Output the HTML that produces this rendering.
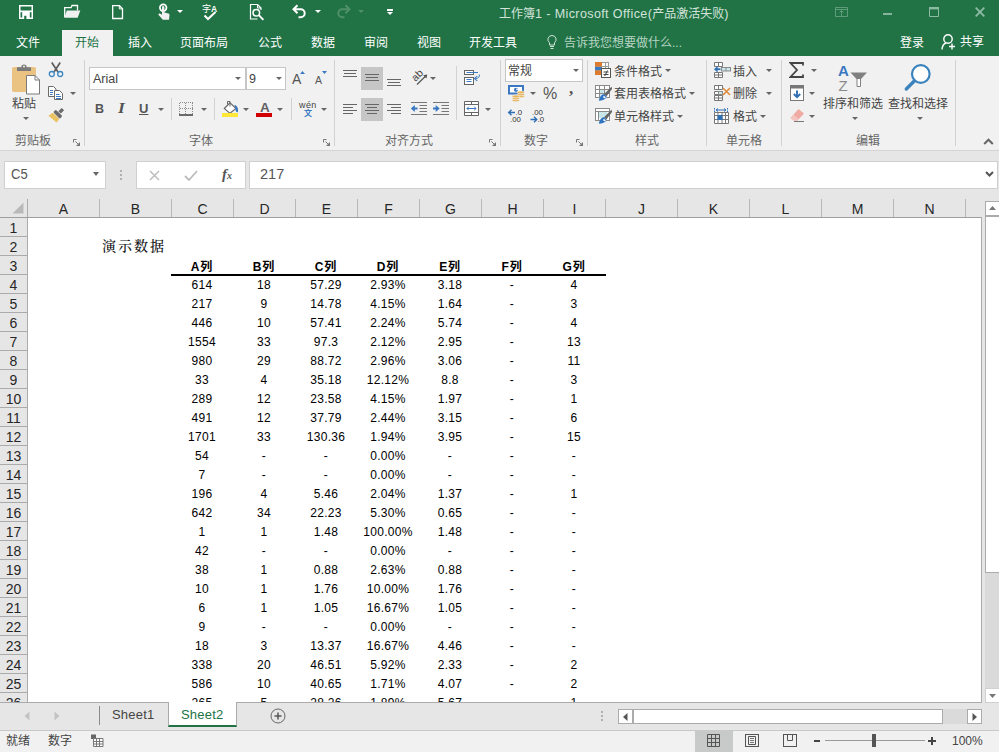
<!DOCTYPE html>
<html lang="zh-CN">
<head>
<meta charset="utf-8">
<title>工作簿1 - Microsoft Office</title>
<style>
html,body{margin:0;padding:0}
body{width:999px;height:752px;overflow:hidden;position:relative;background:#e6e6e6;
 font-family:"Liberation Sans","Noto Sans CJK SC",sans-serif;font-size:12px;color:#444}
div,span,svg{position:absolute;box-sizing:border-box}
.t{white-space:nowrap;line-height:16px;height:16px;margin-top:1px}
#titlebar{left:0;top:0;width:999px;height:56px;background:#217346}
#titlebar .t{color:#fff;margin-top:0}
#ribbon{left:0;top:56px;width:999px;height:94px;background:#f1f1f1}
#ribline{left:0;top:150px;width:999px;height:1px;background:#d4d4d4}
.sep{width:1px;background:#d2d2d2}
.gl{color:#666;line-height:16px;height:16px;white-space:nowrap;margin-top:1px}
.box{background:#fff;border:1px solid #c6c6c6}
.arr{width:0;height:0;border-left:3px solid transparent;border-right:3px solid transparent;border-top:3px solid #666}
.hl{background:#c6c6c6}
#grid{left:28px;top:218px;width:953px;height:484px;background:#fff;overflow:hidden}
.ch{top:200px;height:18px;line-height:18px;text-align:center;font-size:14px;color:#262626}
.rh{left:0;width:27px;height:18px;line-height:20px;text-align:center;font-size:14px;color:#262626}
.c{height:19px;line-height:19px;margin-top:1px;letter-spacing:.3px;text-align:center;font-size:12px;color:#000;white-space:nowrap}
.hb{font-weight:bold;letter-spacing:.8px}
</style>
</head>
<body>
<div id="titlebar">
 <!-- quick access toolbar -->
 <svg style="left:19px;top:5px" width="14" height="14" viewBox="0 0 14 14"><rect x=".75" y=".75" width="12.500" height="12.500" fill="none" stroke="#fff" stroke-width="1.500"/><rect x="1" y="5.500" width="12" height="1.700" fill="#fff"/><rect x="3.200" y="7" width="7.600" height="6.500" fill="#fff"/><rect x="5.200" y="10.800" width="2.200" height="3.200" fill="#217346"/></svg>
 <svg style="left:63px;top:4px" width="18" height="15" viewBox="0 0 18 15"><path d="M1.700 13V3.700h6.300l1-2.200h5.500v5" fill="none" stroke="#fff" stroke-width="1.300"/><path d="M1.200 13.800l2.600-7.300h13.500l-2.600 7.300z" fill="#f0f0f0"/></svg>
 <svg style="left:111px;top:4px" width="13" height="16" viewBox="0 0 13 16"><path d="M1.700 1.700h6.800l3 3v9.800h-9.800z" fill="none" stroke="#fff" stroke-width="1.300"/><path d="M8.300 1.700v3.200h3.200" fill="none" stroke="#fff" stroke-width="1"/></svg>
 <svg style="left:157px;top:3px" width="14" height="18" viewBox="0 0 14 18"><circle cx="6.200" cy="4.700" r="3.300" fill="none" stroke="#fff" stroke-width="1.700"/><path d="M5 4.200a1.200 1.200 0 0 1 2.400 0v5.300l4 1a1.500 1.500 0 0 1 1.100 1.600l-.5 4.600h-6.200l-4.600-5.200 1.300-1.300 2.500 1.600z" fill="#f0f0f0"/></svg>
 <div class="arr" style="left:177px;top:10px;border-top-color:#fff"></div>
 <div class="t" style="left:202px;top:4px;font-size:9px;line-height:10px;height:10px">字<span style="position:static;font-weight:bold;font-size:8.500px">A</span></div>
 <svg style="left:203px;top:11px" width="14" height="10" viewBox="0 0 14 10"><path d="M1.5 4.5l3.5 3.5 7.5-7" fill="none" stroke="#fff" stroke-width="2"/></svg>
 <svg style="left:249px;top:3px" width="16" height="18" viewBox="0 0 16 18"><path d="M9 1.500h-7.500v14.500h7" fill="none" stroke="#fff" stroke-width="1.200"/><path d="M8.500 1.500l3.500 3.500v2" fill="none" stroke="#fff" stroke-width="1.200"/><path d="M8.500 1.500v3.500h3.500" fill="none" stroke="#fff" stroke-width="1"/><circle cx="7.300" cy="9.700" r="3.300" fill="none" stroke="#fff" stroke-width="1.500"/><path d="M9.800 12.200l4.600 4.600" stroke="#fff" stroke-width="1.900"/></svg>
 <svg style="left:291px;top:4px" width="17" height="15" viewBox="0 0 17 15"><path d="M6.500 1.300L2.500 5.300l4 4M2.500 5.300h7.200a4 4 0 0 1 0 8h-2.200" fill="none" stroke="#fff" stroke-width="2"/></svg>
 <div class="arr" style="left:315px;top:10px;border-top-color:#fff"></div>
 <svg style="left:335px;top:4px" width="17" height="15" viewBox="0 0 17 15"><path d="M10.500 1.300L14.500 5.300l-4 4M14.500 5.300h-7.200a4 4 0 0 0 0 8h2.200" fill="none" stroke="#4f9069" stroke-width="2"/></svg>
 <div class="arr" style="left:358px;top:10px;border-top-color:#4f9069"></div>
 <div style="left:387px;top:9px;width:6px;height:1.500px;background:#fff"></div>
 <div class="arr" style="left:387px;top:12px;border-top-color:#fff"></div>
 <div class="t" style="left:499px;top:6px;color:#d3e3da;font-size:12px">工作簿<span style="position:static;font-size:12.500px;letter-spacing:.4px">1 - Microsoft Office(</span>产品激活失败<span style="position:static;font-size:12.500px">)</span></div>
 <!-- window buttons -->
 <svg style="left:835px;top:7px" width="13" height="10" viewBox="0 0 13 10"><path d="M.5.500h12v9h-12z" fill="none" stroke="#5f9c7b" stroke-width="1"/><path d="M.5 2.500h12M6.500 3.500v6M4.500 5.500l2-2 2 2" fill="none" stroke="#5f9c7b" stroke-width="1"/></svg>
 <div style="left:883px;top:12.500px;width:9px;height:2px;background:#86b59b"></div>
 <svg style="left:929px;top:7px" width="10" height="10" viewBox="0 0 10 10"><path d="M.5 1h9v8.500h-9z" fill="none" stroke="#8dbaa2" stroke-width="1"/><path d="M0 1.200h10" stroke="#8dbaa2" stroke-width="2.400"/></svg>
 <svg style="left:975px;top:7px" width="10" height="10" viewBox="0 0 10 10"><path d="M.7 .7l8.600 8.600M9.300 .7L.7 9.300" stroke="#8dbaa2" stroke-width="1.900"/></svg>
 <!-- tabs -->
 <div style="left:62px;top:30px;width:51px;height:26px;background:#f1f1f1"></div>
 <div class="t" style="left:16px;top:35px">文件</div>
 <div class="t" style="left:75px;top:35px;color:#217346">开始</div>
 <div class="t" style="left:128px;top:35px">插入</div>
 <div class="t" style="left:180px;top:35px">页面布局</div>
 <div class="t" style="left:258px;top:35px">公式</div>
 <div class="t" style="left:311px;top:35px">数据</div>
 <div class="t" style="left:364px;top:35px">审阅</div>
 <div class="t" style="left:417px;top:35px">视图</div>
 <div class="t" style="left:469px;top:35px">开发工具</div>
 <svg style="left:546px;top:34px" width="12" height="16" viewBox="0 0 12 16"><path d="M6 1.500a4 4 0 0 1 2.500 7.200v2.300h-5v-2.300a4 4 0 0 1 2.500-7.200z" fill="none" stroke="#cfe3d7" stroke-width="1"/><path d="M4 12.500h4M4.500 14.500h3" stroke="#cfe3d7" stroke-width="1"/></svg>
 <div class="t" style="left:564px;top:35px;color:#b7d3c2">告诉我您想要做什么...</div>
 <div class="t" style="left:900px;top:35px">登录</div>
 <svg style="left:940px;top:33px" width="18" height="18" viewBox="0 0 18 18"><circle cx="8" cy="6" r="4.200" fill="none" stroke="#fff" stroke-width="1.400"/><path d="M2 16.500c.3-4 2.500-6 4-6.500" fill="none" stroke="#fff" stroke-width="1.400"/><path d="M9 13.500h6M12 10.500v6" stroke="#fff" stroke-width="1.400"/></svg>
 <div class="t" style="left:960px;top:34px">共享</div>
</div>
<div id="ribbon"></div>
<div id="ribline"></div>
<!-- clipboard group -->
<svg style="left:11px;top:62px" width="31" height="34" viewBox="0 0 31 34"><rect x="1" y="5" width="24" height="25" rx="1.800" fill="#eac282"/><path d="M6 9v-3.800h4.300a2.700 2.700 0 0 1 5.400 0h4.300v3.800z" fill="#7a7a7a"/><circle cx="13" cy="4.600" r="1" fill="#f1f1f1"/><path d="M15.500 13.500h8.500l4.500 4.500v14h-13z" fill="#fff" stroke="#7a7a7a" stroke-width="1"/><path d="M24 13.500v4.500h4.500" fill="none" stroke="#7a7a7a" stroke-width="1"/></svg>
<div class="t" style="left:12px;top:95px;color:#444">粘贴</div>
<div class="arr" style="left:23px;top:117px"></div>
<svg style="left:48px;top:61px" width="16" height="17" viewBox="0 0 16 17"><path d="M3.800 1.500l6.200 9.500M12.200 1.500l-6.200 9.500" stroke="#5f5f5f" stroke-width="1.700" fill="none"/><circle cx="3.800" cy="13" r="2.500" fill="none" stroke="#3a87c2" stroke-width="1.300"/><circle cx="12.200" cy="13" r="2.500" fill="none" stroke="#3a87c2" stroke-width="1.300"/></svg>
<svg style="left:47px;top:85px" width="17" height="16" viewBox="0 0 17 16"><path d="M1.500 1.500h5l2.500 2.500v7.500h-7.500z" fill="#fff" stroke="#6a6a6a" stroke-width="1"/><path d="M3 5.500h3M3 7.500h3M3 9.500h2.500" stroke="#3a78c2" stroke-width="1"/><path d="M7.500 5.500h5l3 3v6h-8z" fill="#fff" stroke="#6a6a6a" stroke-width="1"/><path d="M9 9.500h3.500M9 11.500h5M9 13.500h5" stroke="#3a78c2" stroke-width="1"/></svg>
<div class="arr" style="left:70px;top:92px"></div>
<svg style="left:47px;top:106px" width="19" height="19" viewBox="-9.500 -9.500 19 19"><g transform="rotate(45)"><rect x="-1.700" y="-9" width="3.400" height="4.600" fill="#6a6a6a"/><rect x="-4.700" y="-3.700" width="9.400" height="3.700" rx="1.200" fill="#6a6a6a"/><path d="M-4.500 .6h9l.5 4.200-10.500 1.200z" fill="#ebc262"/></g></svg>
<div class="gl" style="left:15px;top:132px">剪贴板</div>
<svg style="left:73px;top:139px" width="7" height="7" viewBox="0 0 7 7"><path d="M.5 3.500v-3h3" fill="none" stroke="#777" stroke-width="1"/><path d="M2.500 2.500l3.500 3.500" stroke="#777" stroke-width="1"/><path d="M7 3v4h-4z" fill="#777"/></svg>
<div class="sep" style="left:84px;top:60px;height:86px"></div>
<!-- font group -->
<div class="box" style="left:89px;top:67px;width:157px;height:23px"></div>
<div class="t" style="left:93px;top:70px;color:#444;font-size:12.500px">Arial</div>
<div class="arr" style="left:235px;top:77px"></div>
<div class="box" style="left:246px;top:67px;width:40px;height:23px"></div>
<div class="t" style="left:249px;top:70px;color:#444;font-size:12.500px">9</div>
<div class="arr" style="left:276px;top:77px"></div>
<div class="t" style="left:292px;top:70px;font-size:14px;color:#555">A</div>
<svg style="left:300px;top:71px" width="5" height="3" viewBox="0 0 5 3"><path d="M0 3l2.500-3 2.500 3z" fill="#3a78c2"/></svg>
<div class="t" style="left:315px;top:71px;font-size:10.500px;color:#555">A</div>
<svg style="left:322px;top:71px" width="5" height="3" viewBox="0 0 5 3"><path d="M0 0l2.500 3 2.500-3z" fill="#3a78c2"/></svg>
<div class="t" style="left:95px;top:100px;font-weight:bold;font-size:12.500px;color:#555">B</div>
<div class="t" style="left:118px;top:100px;font-style:italic;font-weight:bold;font-size:14px;color:#555;font-family:'Liberation Serif',serif;transform:scaleX(1.25);transform-origin:0 0">I</div>
<div class="t" style="left:139px;top:100px;font-size:13px;color:#555;font-weight:bold;text-decoration:underline">U</div>
<div class="arr" style="left:158px;top:108px"></div>
<div class="sep" style="left:171px;top:98px;height:22px"></div>
<svg style="left:179px;top:102px" width="15" height="15" viewBox="0 0 15 15" shape-rendering="crispEdges"><path d="M.5.500h13M.500 6.500h13M.500 .500v11M6.500 .500v11M13.500 .500v11" fill="none" stroke="#8c8c8c" stroke-width="1" stroke-dasharray="1 1"/><rect x="0" y="12" width="14" height="2" fill="#6a6a6a"/></svg>
<div class="arr" style="left:201px;top:108px"></div>
<div class="sep" style="left:214px;top:98px;height:22px"></div>
<svg style="left:222px;top:100px" width="17" height="18" viewBox="0 0 17 18"><path d="M2.300 8.500l5.700-5.700 6 5.700-6 4.800z" fill="#fff" stroke="#666" stroke-width="1.100"/><path d="M8 6.500v-5h-2.500v3" fill="none" stroke="#666" stroke-width="1"/><path d="M12.400 4.800c2.800 1 4.300 3.800 3.500 7.400-1.700 .1-2.600-1.300-2.300-3.200z" fill="#3a78c2"/><rect x="0" y="13" width="16" height="4" fill="#ffe838"/></svg>
<div class="arr" style="left:243px;top:108px"></div>
<div class="t" style="left:260px;top:99px;font-size:13.500px;font-weight:bold;color:#606060">A</div>
<div style="left:256px;top:113px;width:16px;height:4px;background:#d20000"></div>
<div class="arr" style="left:277px;top:108px"></div>
<div class="sep" style="left:291px;top:98px;height:22px"></div>
<div class="t" style="left:299px;top:99px;font-size:9px;letter-spacing:.4px;line-height:10px;height:10px;color:#444">wén</div>
<div class="t" style="left:304px;top:108px;font-size:8px;line-height:10px;height:10px;color:#3a78c2;font-weight:bold">文</div>
<div class="arr" style="left:321px;top:108px"></div>
<div class="gl" style="left:189px;top:132px">字体</div>
<svg style="left:323px;top:139px" width="7" height="7" viewBox="0 0 7 7"><path d="M.5 3.500v-3h3" fill="none" stroke="#777" stroke-width="1"/><path d="M2.500 2.500l3.500 3.500" stroke="#777" stroke-width="1"/><path d="M7 3v4h-4z" fill="#777"/></svg>
<div class="sep" style="left:334px;top:60px;height:86px"></div>
<!-- alignment group -->
<div class="hl" style="left:361px;top:67px;width:22px;height:23px"></div>
<div class="hl" style="left:361px;top:98px;width:22px;height:23px"></div>
<svg style="left:342px;top:67px" width="60" height="23" viewBox="0 0 60 23"><path d="M1 3.500h14M2 6.500h12M1 9.500h14M23 7.500h14M24 10.500h12M23 13.500h14M45 12.500h14M46 15.500h12M45 18.500h14" stroke="#666" stroke-width="1"/></svg>
<svg style="left:342px;top:98px" width="60" height="23" viewBox="0 0 60 23"><path d="M1 6.500h14M1 9.500h10M1 12.500h14M1 15.500h10M23 6.500h14M25 9.500h10M23 12.500h14M25 15.500h10M45 6.500h14M49 9.500h10M45 12.500h14M49 15.500h10" stroke="#666" stroke-width="1"/></svg>
<svg style="left:409px;top:68px" width="20" height="20" viewBox="0 0 20 20"><text x="0" y="0" transform="translate(6.500 14) rotate(-45)" font-size="10.500" font-family="Liberation Sans, sans-serif" fill="#444">ab</text><path d="M8 16.500l9.500-9.300" stroke="#555" stroke-width="1.200" fill="none"/><path d="M18.300 6.400l-4.200 .9 3.300 3.300z" fill="#555"/></svg>
<div class="arr" style="left:430px;top:77px"></div>
<svg style="left:410px;top:101px" width="40" height="15" viewBox="0 0 40 15"><path d="M1 1.500h16M9.500 4.500h7.500M9.500 7.500h7.500M9.500 10.500h7.500M1 13.500h16M23 1.500h16M31.500 4.500h7.500M31.500 7.500h7.500M31.500 10.500h7.500M23 13.500h16" stroke="#777" stroke-width="1"/><path d="M7.500 7.500h-4" fill="none" stroke="#3a78c2" stroke-width="2"/><path d="M.8 7.500l4-3.600v7.200z" fill="#3a78c2"/><path d="M23 7.500h4" fill="none" stroke="#3a78c2" stroke-width="2"/><path d="M29.700 7.500l-4-3.600v7.200z" fill="#3a78c2"/></svg>
<div class="sep" style="left:456px;top:66px;height:54px"></div>
<svg style="left:464px;top:69px" width="17" height="17" viewBox="0 0 17 17"><rect x=".5" y="1.500" width="9" height="4" fill="#fff" stroke="#666" stroke-width="1"/><rect x=".5" y="8.500" width="9" height="7" fill="#fff" stroke="#666" stroke-width="1"/><path d="M2.500 3.500h11.500M2.500 10.500h5M2.500 12.500h5" stroke="#3a78c2" stroke-width="1" fill="none"/><path d="M15.300 5.500c.6 2.400-1 4-3.800 4" stroke="#3a78c2" stroke-width="1" fill="none"/><path d="M13.200 7.200l-2.700 2.300 2.700 2.300" stroke="#3a78c2" stroke-width="1.100" fill="none"/></svg>
<svg style="left:464px;top:101px" width="16" height="16" viewBox="0 0 16 16"><path d="M.5.500h14v14h-14z" fill="#fff" stroke="#666" stroke-width="1"/><path d="M.5 3.500h14M.5 11.500h14M7.500 .5v3M7.500 11.500v3" fill="none" stroke="#666" stroke-width="1"/><path d="M3 7.500h9M4.800 5.700l-1.800 1.800 1.800 1.800M10.200 5.700l1.800 1.800-1.800 1.800" fill="none" stroke="#3a78c2" stroke-width="1"/></svg>
<div class="arr" style="left:485px;top:108px"></div>
<div class="gl" style="left:385px;top:132px">对齐方式</div>
<svg style="left:489px;top:139px" width="7" height="7" viewBox="0 0 7 7"><path d="M.5 3.500v-3h3" fill="none" stroke="#777" stroke-width="1"/><path d="M2.500 2.500l3.500 3.500" stroke="#777" stroke-width="1"/><path d="M7 3v4h-4z" fill="#777"/></svg>
<div class="sep" style="left:500px;top:60px;height:86px"></div>
<!-- number group -->
<div class="box" style="left:505px;top:59px;width:78px;height:23px"></div>
<div class="t" style="left:508px;top:62px;color:#444">常规</div>
<div class="arr" style="left:573px;top:69px"></div>
<svg style="left:508px;top:85px" width="17" height="17" viewBox="0 0 17 17"><rect x="1" y="1" width="14" height="7.500" fill="#fff" stroke="#3a78c2" stroke-width="2"/><circle cx="8" cy="4.800" r="2.100" fill="#3a78c2"/><circle cx="9" cy="4.300" r=".9" fill="#fff"/><g fill="#eab65a" stroke="#f1f1f1" stroke-width=".6"><ellipse cx="12.800" cy="11.300" rx="3.600" ry="1.400"/><ellipse cx="12.800" cy="9.300" rx="3.600" ry="1.400"/><ellipse cx="12.800" cy="7.300" rx="3.600" ry="1.400"/><ellipse cx="7.800" cy="15.300" rx="3.600" ry="1.400"/><ellipse cx="7.800" cy="13.300" rx="3.600" ry="1.400"/><ellipse cx="7.800" cy="11.500" rx="3.600" ry="1.400"/></g></svg>
<div class="arr" style="left:530px;top:92px"></div>
<div class="t" style="left:543px;top:85px;font-size:16px;color:#555">%</div>
<div class="t" style="left:569px;top:80px;font-size:17px;font-weight:bold;color:#555;font-family:'Liberation Serif',serif">,</div>
<svg style="left:507px;top:108px" width="40" height="16" viewBox="0 0 40 16"><g font-size="7.800" font-family="Liberation Sans, sans-serif" fill="#333"><text x="8.500" y="6.500">.0</text><text x="3" y="14">.00</text><text x="25" y="6.500">.00</text><text x="30.500" y="14">.0</text></g><path d="M8 4.500h-6M4.500 1.800l-2.800 2.700 2.800 2.700" fill="none" stroke="#2f6fb5" stroke-width="1.400"/><path d="M23.500 11.500h6M27 8.800l2.800 2.700-2.800 2.700" fill="none" stroke="#2f6fb5" stroke-width="1.400"/></svg>
<div class="gl" style="left:524px;top:132px">数字</div>
<svg style="left:576px;top:139px" width="7" height="7" viewBox="0 0 7 7"><path d="M.5 3.500v-3h3" fill="none" stroke="#777" stroke-width="1"/><path d="M2.500 2.500l3.500 3.500" stroke="#777" stroke-width="1"/><path d="M7 3v4h-4z" fill="#777"/></svg>
<div class="sep" style="left:587px;top:60px;height:86px"></div>
<!-- styles group -->
<svg style="left:595px;top:62px" width="17" height="16" viewBox="0 0 17 16"><rect x=".5" y=".5" width="13" height="12" fill="#fff" stroke="#9a9a9a" stroke-width="1"/><path d="M10.500 .5v12M.5 4.500h13M.5 8.500h13" stroke="#9a9a9a" stroke-width="1"/><rect x="0" y="0" width="7" height="4.500" fill="#dc7a2d"/><rect x="0" y="5" width="7" height="3" fill="#3a78c2"/><rect x="0" y="8.500" width="7" height="4.500" fill="#dc7a2d"/><rect x="6.500" y="6.500" width="9" height="9" fill="#fff" stroke="#555" stroke-width="1"/><path d="M8.500 10h5M8.500 12.500h5M12.500 8.500l-2.800 5.500" stroke="#444" stroke-width="1" fill="none"/></svg>
<div class="t" style="left:614px;top:63px">条件格式</div>
<div class="arr" style="left:665px;top:69px"></div>
<svg style="left:595px;top:85px" width="17" height="17" viewBox="0 0 17 17"><rect x=".5" y=".5" width="14" height="12" fill="#fff" stroke="#8a8a8a" stroke-width="1"/><rect x="4.500" y="4.500" width="6" height="6" fill="#c9e6ea"/><path d="M4.500 .5v12M9.500 .5v12M.5 4.500h14M.5 8.500h14" stroke="#8a8a8a" stroke-width="1"/><path d="M16.400 1.800l-7.400 7.400 2.400 2.200 6-7.800z" fill="#666"/><path d="M8.800 9.300c-2.400 .2-4.300 2.600-5 6.300 3.900 .3 6.900-1.200 7.800-4z" fill="#2f74c0"/><ellipse cx="9.400" cy="12.200" rx="1.400" ry=".9" fill="#fff" transform="rotate(35 9.400 12.200)"/></svg>
<div class="t" style="left:614px;top:85px">套用表格格式</div>
<div class="arr" style="left:689px;top:92px"></div>
<svg style="left:595px;top:108px" width="17" height="17" viewBox="0 0 17 17"><rect x=".5" y=".5" width="14" height="12" fill="#fff" stroke="#8a8a8a" stroke-width="1"/><path d="M.5 3.500h14M3.500 3.500v9" stroke="#8a8a8a" stroke-width="1"/><rect x="4" y="4" width="8" height="6" fill="#c9e6ea"/><path d="M16.400 1.800l-7.400 7.400 2.400 2.200 6-7.800z" fill="#666"/><path d="M8.800 9.300c-2.400 .2-4.300 2.600-5 6.300 3.900 .3 6.900-1.200 7.800-4z" fill="#2f74c0"/><ellipse cx="9.400" cy="12.200" rx="1.400" ry=".9" fill="#fff" transform="rotate(35 9.400 12.200)"/></svg>
<div class="t" style="left:614px;top:108px">单元格样式</div>
<div class="arr" style="left:677px;top:115px"></div>
<div class="gl" style="left:635px;top:132px">样式</div>
<div class="sep" style="left:706px;top:60px;height:86px"></div>
<!-- cells group -->
<svg style="left:714px;top:62px" width="17" height="16" viewBox="0 0 17 16"><path d="M.5.500h8v4h-8zM4.500 .5v4M.5 10.500h8v5h-8zM.5 13h8M4.500 10.500v5" fill="#fff" stroke="#777" stroke-width="1"/><rect x="7.500" y="5.500" width="9" height="3.500" fill="#c9e6ea" stroke="#8a8a8a" stroke-width="1"/><path d="M12 5.500v3.500" stroke="#8a8a8a" stroke-width="1"/><path d="M6.500 7.200h-4" fill="none" stroke="#2f6fb5" stroke-width="1.800"/><path d="M0 7.200l3.600-3.200v6.400z" fill="#2f6fb5"/></svg>
<div class="t" style="left:733px;top:63px">插入</div>
<div class="arr" style="left:766px;top:69px"></div>
<svg style="left:714px;top:85px" width="17" height="16" viewBox="0 0 17 16"><path d="M.5.500h8v4h-8zM4.500 .5v4M.5 10.500h8v5h-8zM.5 13h8M4.500 10.500v5M.5 6.500h4v3h-4z" fill="#fff" stroke="#777" stroke-width="1"/><rect x="4.500" y="6.500" width="4" height="3" fill="#c9e6ea" stroke="#8a8a8a" stroke-width="1"/><path d="M9 3l7 7M16 3l-7 7" stroke="#e08a3c" stroke-width="1.600"/></svg>
<div class="t" style="left:733px;top:85px">删除</div>
<div class="arr" style="left:766px;top:92px"></div>
<svg style="left:714px;top:108px" width="17" height="17" viewBox="0 0 17 17"><path d="M.5 0v4M13.500 0v4" stroke="#2f6fb5" stroke-width="1" stroke-dasharray="1.500 1"/><path d="M2 2h10M4 .5l-2 1.500 2 1.500M10 .5l2 1.500-2 1.500" stroke="#2f6fb5" stroke-width="1" fill="none"/><path d="M.5 4.500h14v11h-14zM.5 7.500h14M.5 11.500h14M4 4.500v11M8 4.500v11M11.500 4.500v11" fill="#fff" stroke="#777" stroke-width="1"/><rect x="3.500" y="7" width="5" height="5" fill="#2f6fb5"/></svg>
<div class="t" style="left:733px;top:108px">格式</div>
<div class="arr" style="left:760px;top:115px"></div>
<div class="gl" style="left:726px;top:132px">单元格</div>
<div class="sep" style="left:781px;top:60px;height:86px"></div>
<!-- editing group -->
<svg style="left:789px;top:62px" width="16" height="16" viewBox="0 0 16 16"><path d="M14 3.500v-2.500h-12.500l6.500 7-6.500 7h12.500v-2.500" fill="none" stroke="#444" stroke-width="1.800"/></svg>
<div class="arr" style="left:811px;top:69px"></div>
<svg style="left:790px;top:85px" width="14" height="16" viewBox="0 0 14 16"><rect x=".5" y=".5" width="13" height="15" fill="#fff" stroke="#777" stroke-width="1"/><rect x="0" y="0" width="14" height="3.500" fill="#777"/><path d="M7 5.500v6.500M3.800 9l3.200 3.200 3.200-3.200" fill="none" stroke="#2f6fb5" stroke-width="1.900"/></svg>
<div class="arr" style="left:809px;top:92px"></div>
<svg style="left:790px;top:108px" width="15" height="15" viewBox="0 0 15 15"><path d="M8.500 1l5.500 4.500-6.500 7h-4l-3-2.500z" fill="#efaaa2"/><path d="M.5 10l3 2.500h4l1.300-1.400-5-4.300z" fill="#f4c4bf"/><path d="M4 13.500h10" stroke="#777" stroke-width="1"/></svg>
<div class="arr" style="left:809px;top:115px"></div>
<svg style="left:837px;top:63px" width="32" height="29" viewBox="0 0 32 29"><text x="1" y="13.300" font-size="15" font-weight="bold" font-family="Liberation Sans, sans-serif" fill="#3a78c2">A</text><text x="1.500" y="27.500" font-size="15" font-family="Liberation Sans, sans-serif" fill="#8a8a8a">Z</text><path d="M13.500 9.500h16.500l-6 6.500h-4.500z" fill="#808080"/><path d="M20 16v7.500h3.500v-7.500" fill="#fff" stroke="#808080" stroke-width="1"/></svg>
<div class="t" style="left:823px;top:95px">排序和筛选</div>
<div class="arr" style="left:852px;top:117px"></div>
<svg style="left:903px;top:63px" width="30" height="30" viewBox="0 0 30 30"><circle cx="17.800" cy="11" r="8.800" fill="#fff" stroke="#3b83bd" stroke-width="2.200"/><path d="M11.300 18l-8 8" stroke="#3b83bd" stroke-width="3.400" stroke-linecap="round"/></svg>
<div class="t" style="left:888px;top:95px">查找和选择</div>
<div class="arr" style="left:917px;top:117px"></div>
<div class="gl" style="left:856px;top:132px">编辑</div>
<div class="sep" style="left:955px;top:60px;height:86px"></div>
<svg style="left:983px;top:138px" width="11" height="7" viewBox="0 0 11 7"><path d="M1.200 6l4.300-4.300 4.300 4.300" fill="none" stroke="#666" stroke-width="2"/></svg>
<!-- formula bar -->
<div class="box" style="left:4px;top:161px;width:102px;height:28px;border-color:#d0d0d0"></div>
<div class="t" style="left:11px;top:164px;font-size:15px;color:#555;line-height:18px;height:18px;transform:scaleX(.87);transform-origin:0 0">C5</div>
<div class="arr" style="left:93px;top:172px;border-left-width:3.500px;border-right-width:3.500px;border-top-width:4px"></div>
<div style="left:120px;top:170px;width:2px;height:2px;background:#b0b0b0"></div><div style="left:120px;top:174px;width:2px;height:2px;background:#b0b0b0"></div><div style="left:120px;top:178px;width:2px;height:2px;background:#b0b0b0"></div>
<div class="box" style="left:136px;top:161px;width:110px;height:28px;border-color:#d0d0d0"></div>
<svg style="left:149px;top:170px" width="11" height="11" viewBox="0 0 11 11"><path d="M1 1l9 9M10 1l-9 9" stroke="#bdbdbd" stroke-width="1.500"/></svg>
<svg style="left:184px;top:170px" width="14" height="11" viewBox="0 0 14 11"><path d="M1 6l4 4 8-9" fill="none" stroke="#bdbdbd" stroke-width="1.800"/></svg>
<div class="t" style="left:222px;top:164px;font-size:15px;font-style:italic;font-weight:bold;color:#555;font-family:'Liberation Serif',serif;line-height:18px;height:18px">f<span style="position:static;font-size:10px">x</span></div>
<div class="box" style="left:249px;top:161px;width:749px;height:28px;border-color:#d0d0d0"></div>
<div class="t" style="left:260px;top:164px;font-size:14.500px;color:#555;line-height:18px;height:18px">217</div>
<svg style="left:985px;top:171px" width="9" height="6" viewBox="0 0 9 6"><path d="M1 1l3.500 3.500 3.500-3.500" fill="none" stroke="#555" stroke-width="2"/></svg>
<!-- column headers -->
<svg style="left:12px;top:202px" width="12" height="12" viewBox="0 0 12 12"><path d="M11.500 .500v11h-11z" fill="#b9b9b9"/></svg>
<div style="left:27px;top:199px;width:1px;height:503px;background:#ababab"></div>
<div class="ch" style="left:28px;width:71px">A</div>
<div style="left:99px;top:199px;width:1px;height:18px;background:#b9b9b9"></div>
<div class="ch" style="left:100px;width:71px">B</div>
<div style="left:171px;top:199px;width:1px;height:18px;background:#b9b9b9"></div>
<div class="ch" style="left:172px;width:61px">C</div>
<div style="left:233px;top:199px;width:1px;height:18px;background:#b9b9b9"></div>
<div class="ch" style="left:234px;width:61px">D</div>
<div style="left:295px;top:199px;width:1px;height:18px;background:#b9b9b9"></div>
<div class="ch" style="left:296px;width:61px">E</div>
<div style="left:357px;top:199px;width:1px;height:18px;background:#b9b9b9"></div>
<div class="ch" style="left:358px;width:61px">F</div>
<div style="left:419px;top:199px;width:1px;height:18px;background:#b9b9b9"></div>
<div class="ch" style="left:420px;width:61px">G</div>
<div style="left:481px;top:199px;width:1px;height:18px;background:#b9b9b9"></div>
<div class="ch" style="left:482px;width:61px">H</div>
<div style="left:543px;top:199px;width:1px;height:18px;background:#b9b9b9"></div>
<div class="ch" style="left:544px;width:61px">I</div>
<div style="left:605px;top:199px;width:1px;height:18px;background:#b9b9b9"></div>
<div class="ch" style="left:606px;width:71px">J</div>
<div style="left:677px;top:199px;width:1px;height:18px;background:#b9b9b9"></div>
<div class="ch" style="left:678px;width:71px">K</div>
<div style="left:749px;top:199px;width:1px;height:18px;background:#b9b9b9"></div>
<div class="ch" style="left:750px;width:71px">L</div>
<div style="left:821px;top:199px;width:1px;height:18px;background:#b9b9b9"></div>
<div class="ch" style="left:822px;width:71px">M</div>
<div style="left:893px;top:199px;width:1px;height:18px;background:#b9b9b9"></div>
<div class="ch" style="left:894px;width:71px">N</div>
<div style="left:965px;top:199px;width:1px;height:18px;background:#b9b9b9"></div>
<div style="left:0;top:217px;width:982px;height:1px;background:#9e9e9e"></div>
<!-- row headers -->
<div class="rh" style="top:218px">1</div><div style="left:0;top:236px;width:27px;height:1px;background:#ababab"></div>
<div class="rh" style="top:237px">2</div><div style="left:0;top:255px;width:27px;height:1px;background:#ababab"></div>
<div class="rh" style="top:256px">3</div><div style="left:0;top:274px;width:27px;height:1px;background:#ababab"></div>
<div class="rh" style="top:275px">4</div><div style="left:0;top:293px;width:27px;height:1px;background:#ababab"></div>
<div class="rh" style="top:294px">5</div><div style="left:0;top:312px;width:27px;height:1px;background:#ababab"></div>
<div class="rh" style="top:313px">6</div><div style="left:0;top:331px;width:27px;height:1px;background:#ababab"></div>
<div class="rh" style="top:332px">7</div><div style="left:0;top:350px;width:27px;height:1px;background:#ababab"></div>
<div class="rh" style="top:351px">8</div><div style="left:0;top:369px;width:27px;height:1px;background:#ababab"></div>
<div class="rh" style="top:370px">9</div><div style="left:0;top:388px;width:27px;height:1px;background:#ababab"></div>
<div class="rh" style="top:389px">10</div><div style="left:0;top:407px;width:27px;height:1px;background:#ababab"></div>
<div class="rh" style="top:408px">11</div><div style="left:0;top:426px;width:27px;height:1px;background:#ababab"></div>
<div class="rh" style="top:427px">12</div><div style="left:0;top:445px;width:27px;height:1px;background:#ababab"></div>
<div class="rh" style="top:446px">13</div><div style="left:0;top:464px;width:27px;height:1px;background:#ababab"></div>
<div class="rh" style="top:465px">14</div><div style="left:0;top:483px;width:27px;height:1px;background:#ababab"></div>
<div class="rh" style="top:484px">15</div><div style="left:0;top:502px;width:27px;height:1px;background:#ababab"></div>
<div class="rh" style="top:503px">16</div><div style="left:0;top:521px;width:27px;height:1px;background:#ababab"></div>
<div class="rh" style="top:522px">17</div><div style="left:0;top:540px;width:27px;height:1px;background:#ababab"></div>
<div class="rh" style="top:541px">18</div><div style="left:0;top:559px;width:27px;height:1px;background:#ababab"></div>
<div class="rh" style="top:560px">19</div><div style="left:0;top:578px;width:27px;height:1px;background:#ababab"></div>
<div class="rh" style="top:579px">20</div><div style="left:0;top:597px;width:27px;height:1px;background:#ababab"></div>
<div class="rh" style="top:598px">21</div><div style="left:0;top:616px;width:27px;height:1px;background:#ababab"></div>
<div class="rh" style="top:617px">22</div><div style="left:0;top:635px;width:27px;height:1px;background:#ababab"></div>
<div class="rh" style="top:636px">23</div><div style="left:0;top:654px;width:27px;height:1px;background:#ababab"></div>
<div class="rh" style="top:655px">24</div><div style="left:0;top:673px;width:27px;height:1px;background:#ababab"></div>
<div class="rh" style="top:674px">25</div><div style="left:0;top:692px;width:27px;height:1px;background:#ababab"></div>
<div class="rh" style="top:693px;height:9px;overflow:hidden">26</div>
<!-- sheet -->
<div id="grid">
<div class="c" style="left:74px;top:19px;margin-top:0;font-size:14px;letter-spacing:2px;color:#111;font-weight:500;font-family:'Liberation Serif','Noto Serif CJK SC',serif">演示数据</div>
<div class="c hb" style="left:143px;top:39px;width:62px">A列</div>
<div class="c hb" style="left:205px;top:39px;width:62px">B列</div>
<div class="c hb" style="left:267px;top:39px;width:62px">C列</div>
<div class="c hb" style="left:329px;top:39px;width:62px">D列</div>
<div class="c hb" style="left:391px;top:39px;width:62px">E列</div>
<div class="c hb" style="left:453px;top:39px;width:62px">F列</div>
<div class="c hb" style="left:515px;top:39px;width:62px">G列</div>
<div style="left:143px;top:56px;width:435px;height:2px;background:#000"></div>
<div class="c" style="left:143px;top:57px;width:62px">614</div>
<div class="c" style="left:205px;top:57px;width:62px">18</div>
<div class="c" style="left:267px;top:57px;width:62px">57.29</div>
<div class="c" style="left:329px;top:57px;width:62px">2.93%</div>
<div class="c" style="left:391px;top:57px;width:62px">3.18</div>
<div class="c" style="left:453px;top:57px;width:62px">-</div>
<div class="c" style="left:515px;top:57px;width:62px">4</div>
<div class="c" style="left:143px;top:76px;width:62px">217</div>
<div class="c" style="left:205px;top:76px;width:62px">9</div>
<div class="c" style="left:267px;top:76px;width:62px">14.78</div>
<div class="c" style="left:329px;top:76px;width:62px">4.15%</div>
<div class="c" style="left:391px;top:76px;width:62px">1.64</div>
<div class="c" style="left:453px;top:76px;width:62px">-</div>
<div class="c" style="left:515px;top:76px;width:62px">3</div>
<div class="c" style="left:143px;top:95px;width:62px">446</div>
<div class="c" style="left:205px;top:95px;width:62px">10</div>
<div class="c" style="left:267px;top:95px;width:62px">57.41</div>
<div class="c" style="left:329px;top:95px;width:62px">2.24%</div>
<div class="c" style="left:391px;top:95px;width:62px">5.74</div>
<div class="c" style="left:453px;top:95px;width:62px">-</div>
<div class="c" style="left:515px;top:95px;width:62px">4</div>
<div class="c" style="left:143px;top:114px;width:62px">1554</div>
<div class="c" style="left:205px;top:114px;width:62px">33</div>
<div class="c" style="left:267px;top:114px;width:62px">97.3</div>
<div class="c" style="left:329px;top:114px;width:62px">2.12%</div>
<div class="c" style="left:391px;top:114px;width:62px">2.95</div>
<div class="c" style="left:453px;top:114px;width:62px">-</div>
<div class="c" style="left:515px;top:114px;width:62px">13</div>
<div class="c" style="left:143px;top:133px;width:62px">980</div>
<div class="c" style="left:205px;top:133px;width:62px">29</div>
<div class="c" style="left:267px;top:133px;width:62px">88.72</div>
<div class="c" style="left:329px;top:133px;width:62px">2.96%</div>
<div class="c" style="left:391px;top:133px;width:62px">3.06</div>
<div class="c" style="left:453px;top:133px;width:62px">-</div>
<div class="c" style="left:515px;top:133px;width:62px">11</div>
<div class="c" style="left:143px;top:152px;width:62px">33</div>
<div class="c" style="left:205px;top:152px;width:62px">4</div>
<div class="c" style="left:267px;top:152px;width:62px">35.18</div>
<div class="c" style="left:329px;top:152px;width:62px">12.12%</div>
<div class="c" style="left:391px;top:152px;width:62px">8.8</div>
<div class="c" style="left:453px;top:152px;width:62px">-</div>
<div class="c" style="left:515px;top:152px;width:62px">3</div>
<div class="c" style="left:143px;top:171px;width:62px">289</div>
<div class="c" style="left:205px;top:171px;width:62px">12</div>
<div class="c" style="left:267px;top:171px;width:62px">23.58</div>
<div class="c" style="left:329px;top:171px;width:62px">4.15%</div>
<div class="c" style="left:391px;top:171px;width:62px">1.97</div>
<div class="c" style="left:453px;top:171px;width:62px">-</div>
<div class="c" style="left:515px;top:171px;width:62px">1</div>
<div class="c" style="left:143px;top:190px;width:62px">491</div>
<div class="c" style="left:205px;top:190px;width:62px">12</div>
<div class="c" style="left:267px;top:190px;width:62px">37.79</div>
<div class="c" style="left:329px;top:190px;width:62px">2.44%</div>
<div class="c" style="left:391px;top:190px;width:62px">3.15</div>
<div class="c" style="left:453px;top:190px;width:62px">-</div>
<div class="c" style="left:515px;top:190px;width:62px">6</div>
<div class="c" style="left:143px;top:209px;width:62px">1701</div>
<div class="c" style="left:205px;top:209px;width:62px">33</div>
<div class="c" style="left:267px;top:209px;width:62px">130.36</div>
<div class="c" style="left:329px;top:209px;width:62px">1.94%</div>
<div class="c" style="left:391px;top:209px;width:62px">3.95</div>
<div class="c" style="left:453px;top:209px;width:62px">-</div>
<div class="c" style="left:515px;top:209px;width:62px">15</div>
<div class="c" style="left:143px;top:228px;width:62px">54</div>
<div class="c" style="left:205px;top:228px;width:62px">-</div>
<div class="c" style="left:267px;top:228px;width:62px">-</div>
<div class="c" style="left:329px;top:228px;width:62px">0.00%</div>
<div class="c" style="left:391px;top:228px;width:62px">-</div>
<div class="c" style="left:453px;top:228px;width:62px">-</div>
<div class="c" style="left:515px;top:228px;width:62px">-</div>
<div class="c" style="left:143px;top:247px;width:62px">7</div>
<div class="c" style="left:205px;top:247px;width:62px">-</div>
<div class="c" style="left:267px;top:247px;width:62px">-</div>
<div class="c" style="left:329px;top:247px;width:62px">0.00%</div>
<div class="c" style="left:391px;top:247px;width:62px">-</div>
<div class="c" style="left:453px;top:247px;width:62px">-</div>
<div class="c" style="left:515px;top:247px;width:62px">-</div>
<div class="c" style="left:143px;top:266px;width:62px">196</div>
<div class="c" style="left:205px;top:266px;width:62px">4</div>
<div class="c" style="left:267px;top:266px;width:62px">5.46</div>
<div class="c" style="left:329px;top:266px;width:62px">2.04%</div>
<div class="c" style="left:391px;top:266px;width:62px">1.37</div>
<div class="c" style="left:453px;top:266px;width:62px">-</div>
<div class="c" style="left:515px;top:266px;width:62px">1</div>
<div class="c" style="left:143px;top:285px;width:62px">642</div>
<div class="c" style="left:205px;top:285px;width:62px">34</div>
<div class="c" style="left:267px;top:285px;width:62px">22.23</div>
<div class="c" style="left:329px;top:285px;width:62px">5.30%</div>
<div class="c" style="left:391px;top:285px;width:62px">0.65</div>
<div class="c" style="left:453px;top:285px;width:62px">-</div>
<div class="c" style="left:515px;top:285px;width:62px">-</div>
<div class="c" style="left:143px;top:304px;width:62px">1</div>
<div class="c" style="left:205px;top:304px;width:62px">1</div>
<div class="c" style="left:267px;top:304px;width:62px">1.48</div>
<div class="c" style="left:329px;top:304px;width:62px">100.00%</div>
<div class="c" style="left:391px;top:304px;width:62px">1.48</div>
<div class="c" style="left:453px;top:304px;width:62px">-</div>
<div class="c" style="left:515px;top:304px;width:62px">-</div>
<div class="c" style="left:143px;top:323px;width:62px">42</div>
<div class="c" style="left:205px;top:323px;width:62px">-</div>
<div class="c" style="left:267px;top:323px;width:62px">-</div>
<div class="c" style="left:329px;top:323px;width:62px">0.00%</div>
<div class="c" style="left:391px;top:323px;width:62px">-</div>
<div class="c" style="left:453px;top:323px;width:62px">-</div>
<div class="c" style="left:515px;top:323px;width:62px">-</div>
<div class="c" style="left:143px;top:342px;width:62px">38</div>
<div class="c" style="left:205px;top:342px;width:62px">1</div>
<div class="c" style="left:267px;top:342px;width:62px">0.88</div>
<div class="c" style="left:329px;top:342px;width:62px">2.63%</div>
<div class="c" style="left:391px;top:342px;width:62px">0.88</div>
<div class="c" style="left:453px;top:342px;width:62px">-</div>
<div class="c" style="left:515px;top:342px;width:62px">-</div>
<div class="c" style="left:143px;top:361px;width:62px">10</div>
<div class="c" style="left:205px;top:361px;width:62px">1</div>
<div class="c" style="left:267px;top:361px;width:62px">1.76</div>
<div class="c" style="left:329px;top:361px;width:62px">10.00%</div>
<div class="c" style="left:391px;top:361px;width:62px">1.76</div>
<div class="c" style="left:453px;top:361px;width:62px">-</div>
<div class="c" style="left:515px;top:361px;width:62px">-</div>
<div class="c" style="left:143px;top:380px;width:62px">6</div>
<div class="c" style="left:205px;top:380px;width:62px">1</div>
<div class="c" style="left:267px;top:380px;width:62px">1.05</div>
<div class="c" style="left:329px;top:380px;width:62px">16.67%</div>
<div class="c" style="left:391px;top:380px;width:62px">1.05</div>
<div class="c" style="left:453px;top:380px;width:62px">-</div>
<div class="c" style="left:515px;top:380px;width:62px">-</div>
<div class="c" style="left:143px;top:399px;width:62px">9</div>
<div class="c" style="left:205px;top:399px;width:62px">-</div>
<div class="c" style="left:267px;top:399px;width:62px">-</div>
<div class="c" style="left:329px;top:399px;width:62px">0.00%</div>
<div class="c" style="left:391px;top:399px;width:62px">-</div>
<div class="c" style="left:453px;top:399px;width:62px">-</div>
<div class="c" style="left:515px;top:399px;width:62px">-</div>
<div class="c" style="left:143px;top:418px;width:62px">18</div>
<div class="c" style="left:205px;top:418px;width:62px">3</div>
<div class="c" style="left:267px;top:418px;width:62px">13.37</div>
<div class="c" style="left:329px;top:418px;width:62px">16.67%</div>
<div class="c" style="left:391px;top:418px;width:62px">4.46</div>
<div class="c" style="left:453px;top:418px;width:62px">-</div>
<div class="c" style="left:515px;top:418px;width:62px">-</div>
<div class="c" style="left:143px;top:437px;width:62px">338</div>
<div class="c" style="left:205px;top:437px;width:62px">20</div>
<div class="c" style="left:267px;top:437px;width:62px">46.51</div>
<div class="c" style="left:329px;top:437px;width:62px">5.92%</div>
<div class="c" style="left:391px;top:437px;width:62px">2.33</div>
<div class="c" style="left:453px;top:437px;width:62px">-</div>
<div class="c" style="left:515px;top:437px;width:62px">2</div>
<div class="c" style="left:143px;top:456px;width:62px">586</div>
<div class="c" style="left:205px;top:456px;width:62px">10</div>
<div class="c" style="left:267px;top:456px;width:62px">40.65</div>
<div class="c" style="left:329px;top:456px;width:62px">1.71%</div>
<div class="c" style="left:391px;top:456px;width:62px">4.07</div>
<div class="c" style="left:453px;top:456px;width:62px">-</div>
<div class="c" style="left:515px;top:456px;width:62px">2</div>
<div class="c" style="left:143px;top:475px;width:62px">265</div>
<div class="c" style="left:205px;top:475px;width:62px">5</div>
<div class="c" style="left:267px;top:475px;width:62px">28.26</div>
<div class="c" style="left:329px;top:475px;width:62px">1.89%</div>
<div class="c" style="left:391px;top:475px;width:62px">5.67</div>
<div class="c" style="left:453px;top:475px;width:62px">-</div>
<div class="c" style="left:515px;top:475px;width:62px">1</div>
</div>
<div style="left:981px;top:217px;width:1px;height:485px;background:#ababab"></div>
<!-- vertical scrollbar -->
<div style="left:985px;top:201px;width:14px;height:502px;background:#dadada"></div>
<div style="left:985px;top:201px;width:15px;height:15px;background:#fff;border:1px solid #ababab"></div>
<div style="left:985px;top:216px;width:15px;height:357px;background:#fff;border:1px solid #ababab"></div>
<div style="left:985px;top:688px;width:15px;height:15px;background:#fff;border:1px solid #d0d0d0"></div>
<svg style="left:989px;top:206px" width="7" height="4" viewBox="0 0 7 4"><path d="M0 4l3.500-4 3.500 4z" fill="#777"/></svg>
<svg style="left:989px;top:694px" width="7" height="4" viewBox="0 0 7 4"><path d="M0 0l3.500 4 3.500-4z" fill="#777"/></svg>
<!-- sheet tab bar -->
<div style="left:0;top:702px;width:982px;height:1px;background:#ababab"></div>
<svg style="left:24px;top:711px" width="6" height="10" viewBox="0 0 6 10"><path d="M5.500 .500v9l-5-4.500z" fill="#c3c3c3"/></svg>
<svg style="left:54px;top:711px" width="6" height="10" viewBox="0 0 6 10"><path d="M.5 .500v9l5-4.500z" fill="#c3c3c3"/></svg>
<div style="left:99px;top:706px;width:1px;height:19px;background:#8a8a8a"></div>
<div class="t" style="left:112px;top:705px;font-size:13px;letter-spacing:.2px;color:#444;line-height:18px;height:18px">Sheet1</div>
<div style="left:168px;top:702px;width:69px;height:25px;background:#fff;border-left:1px solid #ababab;border-right:1px solid #ababab;border-bottom:2px solid #217346"></div>
<div class="t" style="left:181px;top:705px;font-size:13px;letter-spacing:.2px;color:#217346;line-height:18px;height:18px">Sheet2</div>
<svg style="left:270px;top:708px" width="16" height="16" viewBox="0 0 16 16"><circle cx="8" cy="8" r="7" fill="none" stroke="#666" stroke-width="1"/><path d="M4.500 8h7M8 4.500v7" stroke="#555" stroke-width="1.500"/></svg>
<div style="left:601px;top:711px;width:2px;height:2px;background:#b0b0b0"></div><div style="left:601px;top:715px;width:2px;height:2px;background:#b0b0b0"></div><div style="left:601px;top:719px;width:2px;height:2px;background:#b0b0b0"></div>
<div style="left:633px;top:709px;width:334px;height:15px;background:#dadada"></div>
<div style="left:618px;top:709px;width:15px;height:15px;background:#fff;border:1px solid #ababab"></div>
<div style="left:633px;top:709px;width:310px;height:15px;background:#fff;border:1px solid #ababab"></div>
<div style="left:967px;top:709px;width:15px;height:15px;background:#fff;border:1px solid #ababab"></div>
<svg style="left:623px;top:713px" width="5" height="8" viewBox="0 0 5 8"><path d="M4.500 0v8l-4.500-4z" fill="#555"/></svg>
<svg style="left:972px;top:713px" width="5" height="8" viewBox="0 0 5 8"><path d="M.5 0v8l4.500-4z" fill="#555"/></svg>
<!-- status bar -->
<div style="left:0;top:730px;width:999px;height:22px;background:#f1f1f1;border-top:1px solid #c9c9c9"></div>
<div class="t" style="left:6px;top:732px;color:#444">就绪</div>
<div class="t" style="left:48px;top:732px;color:#444">数字</div>
<svg style="left:90px;top:734px" width="14" height="13" viewBox="0 0 14 13"><rect x="1" y=".500" width="5" height="4.500" fill="#666"/><path d="M3.500 4.500h9.500v8h-9.500zM3.500 7.500h9.500M3.500 10h9.500M6.500 4.500v8M9.500 4.500v8" fill="#fff" stroke="#777" stroke-width="1"/></svg>
<div style="left:695px;top:731px;width:38px;height:21px;background:#c8caca"></div>
<svg style="left:707px;top:734px" width="13" height="13" viewBox="0 0 13 13"><path d="M.5 .500h12v12h-12zM.500 4.500h12M.500 8.500h12M4.500 .500v12M8.500 .500v12" fill="none" stroke="#555" stroke-width="1"/></svg>
<svg style="left:745px;top:734px" width="14" height="13" viewBox="0 0 14 13"><rect x=".5" y=".500" width="13" height="12" fill="none" stroke="#555" stroke-width="1"/><path d="M3.500 2.500h7v8h-7z" fill="none" stroke="#555" stroke-width="1"/><path d="M5 4.500h4M5 6.500h4M5 8.500h4" fill="none" stroke="#777" stroke-width="1"/></svg>
<svg style="left:783px;top:734px" width="14" height="13" viewBox="0 0 14 13"><rect x=".5" y=".500" width="13" height="12" fill="none" stroke="#555" stroke-width="1"/><path d="M4.500 .500v6h5v-6" fill="none" stroke="#555" stroke-width="1"/></svg>
<div style="left:814px;top:740px;width:6px;height:2px;background:#444"></div>
<div style="left:825px;top:740px;width:100px;height:1px;background:#9a9a9a"></div>
<div style="left:872px;top:734px;width:4px;height:13px;background:#555"></div>
<div style="left:928px;top:740px;width:8px;height:2px;background:#444"></div>
<div style="left:931px;top:737px;width:2px;height:8px;background:#444"></div>
<div class="t" style="left:952px;top:732px;color:#444">100%</div>
</body>
</html>
